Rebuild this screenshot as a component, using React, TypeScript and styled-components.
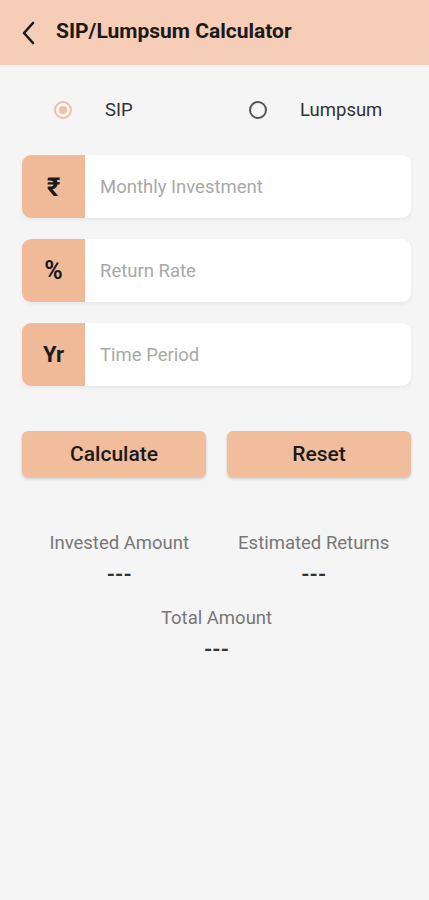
import React, { useState } from 'react';
import styled, { createGlobalStyle } from 'styled-components';

const GlobalStyle = createGlobalStyle`
  html, body {
    margin: 0;
    padding: 0;
    background: #f5f5f5;
    font-family: Roboto, "Liberation Sans", sans-serif;
  }
`;

const Page = styled.div`
  width: 429px;
  min-height: 900px;
  background: #f5f5f5;
  display: flex;
  flex-direction: column;
`;

const Header = styled.div`
  height: 65px;
  background: #f6cdb6;
  display: flex;
  align-items: center;
  padding-left: 18px;
  gap: 18px;
  box-sizing: border-box;
`;

const BackButton = styled.button`
  border: none;
  background: none;
  padding: 0;
  width: 20px;
  height: 24px;
  display: flex;
  align-items: center;
  justify-content: center;
  cursor: pointer;
`;

const Title = styled.h1`
  margin: 0;
  font-size: 21px;
  font-weight: 700;
  color: #1a1a1a;
  padding-bottom: 4px;
`;

const Content = styled.div`
  display: flex;
  flex-direction: column;
  padding: 0 18px 0 22px;
`;

const RadioRow = styled.div`
  display: grid;
  grid-template-columns: 195px 1fr;
  height: 90px;
  align-items: center;
  padding-left: 32px;
`;

const RadioLabel = styled.label`
  display: flex;
  align-items: center;
  gap: 33px;
  font-size: 18.5px;
  color: #333;
  cursor: pointer;
`;

const RadioCircle = styled.span<{ checked: boolean }>`
  width: 18px;
  height: 18px;
  border-radius: 50%;
  box-sizing: border-box;
  border: 2px solid ${(p) => (p.checked ? '#f0bfa3' : '#555')};
  display: flex;
  align-items: center;
  justify-content: center;

  &::after {
    content: '';
    width: 8px;
    height: 8px;
    border-radius: 50%;
    background: ${(p) => (p.checked ? '#f0bfa3' : 'transparent')};
  }
`;

const Fields = styled.div`
  display: flex;
  flex-direction: column;
  gap: 21px;
`;

const Field = styled.div`
  display: flex;
  height: 63px;
  border-radius: 9px;
  background: #fff;
  box-shadow: 0 2px 4px rgba(0, 0, 0, 0.06);
  overflow: hidden;
`;

const FieldIcon = styled.div<{ size?: number }>`
  width: 63px;
  background: #f0ba99;
  display: flex;
  align-items: center;
  justify-content: center;
  font-size: ${(p) => p.size ?? 22}px;
  font-weight: 700;
  color: #1a1a1a;
`;

const FieldInput = styled.input`
  flex: 1;
  border: none;
  outline: none;
  background: transparent;
  padding: 0 15px;
  font-family: Roboto, "Liberation Sans", sans-serif;
  font-size: 18.5px;
  color: #333;

  &::placeholder {
    color: #a8a8a8;
  }
`;

const Buttons = styled.div`
  display: grid;
  grid-template-columns: 1fr 1fr;
  gap: 21px;
  margin-top: 45px;
`;

const ActionButton = styled.button`
  height: 46px;
  border: none;
  border-radius: 6px;
  background: #f2bd9d;
  box-shadow: 0 2px 3px rgba(0, 0, 0, 0.18);
  font-family: Roboto, "Liberation Sans", sans-serif;
  font-size: 21px;
  font-weight: 500;
  color: #1a1a1a;
  cursor: pointer;
`;

const Results = styled.div`
  display: grid;
  grid-template-columns: 1fr 1fr;
  row-gap: 18px;
  margin-top: 53px;
`;

const ResultItem = styled.div<{ wide?: boolean }>`
  display: flex;
  flex-direction: column;
  align-items: center;
  grid-column: ${(p) => (p.wide ? '1 / span 2' : 'auto')};
`;

const ResultLabel = styled.div`
  font-size: 18.5px;
  color: #777;
  line-height: 26px;
`;

const ResultValue = styled.div`
  font-size: 21px;
  font-weight: 700;
  color: #333;
  line-height: 26px;
  margin-top: 5px;
`;

export default function App() {
  const [mode, setMode] = useState<'sip' | 'lumpsum'>('sip');

  return (
    <>
      <GlobalStyle />
      <Page>
        <Header>
          <BackButton aria-label="Back">
            <svg width="14" height="24" viewBox="0 0 14 24" fill="none">
              <path d="M12 2 L3 12 L12 22" stroke="#1a1a1a" strokeWidth="2.6" strokeLinecap="round" strokeLinejoin="round" />
            </svg>
          </BackButton>
          <Title>SIP/Lumpsum Calculator</Title>
        </Header>
        <Content>
          <RadioRow>
            <RadioLabel onClick={() => setMode('sip')}>
              <RadioCircle checked={mode === 'sip'} />
              SIP
            </RadioLabel>
            <RadioLabel onClick={() => setMode('lumpsum')}>
              <RadioCircle checked={mode === 'lumpsum'} />
              Lumpsum
            </RadioLabel>
          </RadioRow>

          <Fields>
            <Field>
              <FieldIcon size={26}>₹</FieldIcon>
              <FieldInput placeholder="Monthly Investment" />
            </Field>
            <Field>
              <FieldIcon size={25}>%</FieldIcon>
              <FieldInput placeholder="Return Rate" />
            </Field>
            <Field>
              <FieldIcon>Yr</FieldIcon>
              <FieldInput placeholder="Time Period" />
            </Field>
          </Fields>

          <Buttons>
            <ActionButton>Calculate</ActionButton>
            <ActionButton>Reset</ActionButton>
          </Buttons>

          <Results>
            <ResultItem>
              <ResultLabel>Invested Amount</ResultLabel>
              <ResultValue>---</ResultValue>
            </ResultItem>
            <ResultItem>
              <ResultLabel>Estimated Returns</ResultLabel>
              <ResultValue>---</ResultValue>
            </ResultItem>
            <ResultItem wide>
              <ResultLabel>Total Amount</ResultLabel>
              <ResultValue>---</ResultValue>
            </ResultItem>
          </Results>
        </Content>
      </Page>
    </>
  );
}
